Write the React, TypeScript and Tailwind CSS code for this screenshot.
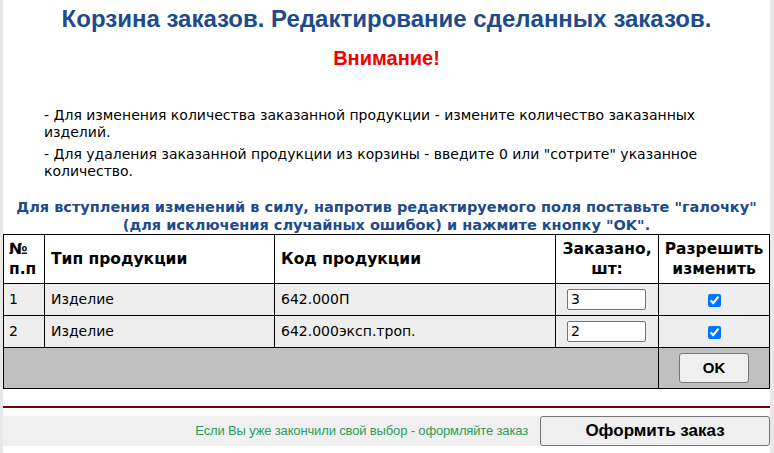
import React from "react";

const rows = [
  { n: 1, type: "Изделие", code: "642.000П", qty: "3" },
  { n: 2, type: "Изделие", code: "642.000эксп.троп.", qty: "2" },
];

const tahoma = "font-['Tahoma','DejaVu_Sans',sans-serif]";

export default function App() {
  return (
    <div className="min-h-screen bg-[#e8e8e8] pl-[3px] pr-[4px]">
      <div className="bg-white min-h-screen">
        {/* Title */}
        <h1 className="pt-[4px] text-center text-[24px] leading-[30px] font-bold text-[#1d4b8c] font-['Liberation_Sans',Arial,sans-serif]">
          Корзина заказов. Редактирование сделанных заказов.
        </h1>
        <div className="mt-[11px] text-center text-[20px] leading-[26px] font-bold text-[#f00000] font-['Liberation_Sans',Arial,sans-serif]">
          Внимание!
        </div>

        {/* Notes */}
        <div className={`mt-[36px] pl-[41px] pr-[50px] text-[14px] leading-[17px] text-black ${tahoma}`}>
          <p>- Для изменения количества заказанной продукции - измените количество заказанных изделий.</p>
          <p className="mt-[5px]">
            - Для удаления заказанной продукции из корзины - введите 0 или "сотрите" указанное количество.
          </p>
        </div>

        <p className={`mt-[18px] text-center text-[14.5px] leading-[18px] font-bold text-[#1d4b8c] ${tahoma}`}>
          Для вступления изменений в силу, напротив редактируемого поля поставьте "галочку"
          <br />
          (для исключения случайных ошибок) и нажмите кнопку "OK".
        </p>

        {/* Table */}
        <table className={`w-full border-collapse border border-black text-[14px] text-black ${tahoma}`}>
          <colgroup>
            <col className="w-[41px]" />
            <col className="w-[230px]" />
            <col className="w-[281px]" />
            <col className="w-[103px]" />
            <col />
          </colgroup>
          <thead>
            <tr className="h-[49px] bg-white font-bold text-[15.5px] leading-[20px]">
              <th className="border border-black px-[5px] text-left">
                №<br />п.п
              </th>
              <th className="border border-black px-[6px] text-left">Тип продукции</th>
              <th className="border border-black px-[6px] text-left">Код продукции</th>
              <th className="border border-black px-[2px] text-center">
                Заказано,
                <br />
                шт:
              </th>
              <th className="border border-black px-[2px] text-center">
                Разрешить
                <br />
                изменить
              </th>
            </tr>
          </thead>
          <tbody>
            {rows.map((r) => (
              <tr key={r.n} className="h-[32px] bg-[#eeeeee]">
                <td className="border border-black px-[5px]">{r.n}</td>
                <td className="border border-black px-[6px]">{r.type}</td>
                <td className="border border-black px-[6px]">{r.code}</td>
                <td className="border border-black px-[11px]">
                  <input
                    type="text"
                    defaultValue={r.qty}
                    className="block w-[79px] h-[21px] bg-white border border-[#767676] rounded-[2px] px-[3px] text-[14px] outline-none"
                  />
                </td>
                <td className="border border-black text-center">
                  <input type="checkbox" defaultChecked className="align-middle w-[13px] h-[13px]" />
                </td>
              </tr>
            ))}
            <tr className="h-[41px] bg-[#c0c0c0]">
              <td colSpan={4} className="border border-black" />
              <td className="border border-black text-center">
                <button className="inline-block w-[70px] h-[30px] bg-[#efefef] border border-[#767676] rounded-[3px] text-[15px] font-bold font-['Liberation_Sans',Arial,sans-serif] align-middle">
                  OK
                </button>
              </td>
            </tr>
          </tbody>
        </table>

        {/* Divider */}
        <div className="mt-[17px] h-[2px] bg-[#800000]" />

        {/* Checkout bar */}
        <div className="mt-[8px] flex items-center justify-end gap-[12px] bg-[#f0f0f0] h-[30px]">
          <span className="text-[13px] tracking-[-0.15px] text-[#2a9d5c] font-['Liberation_Sans',Arial,sans-serif]">
            Если Вы уже закончили свой выбор - оформляйте заказ
          </span>
          <button className="w-[230px] h-[30px] bg-[#efefef] border border-[#767676] rounded-[3px] text-[17px] font-bold text-black font-['Liberation_Sans',Arial,sans-serif]">
            Оформить заказ
          </button>
        </div>
      </div>
    </div>
  );
}
